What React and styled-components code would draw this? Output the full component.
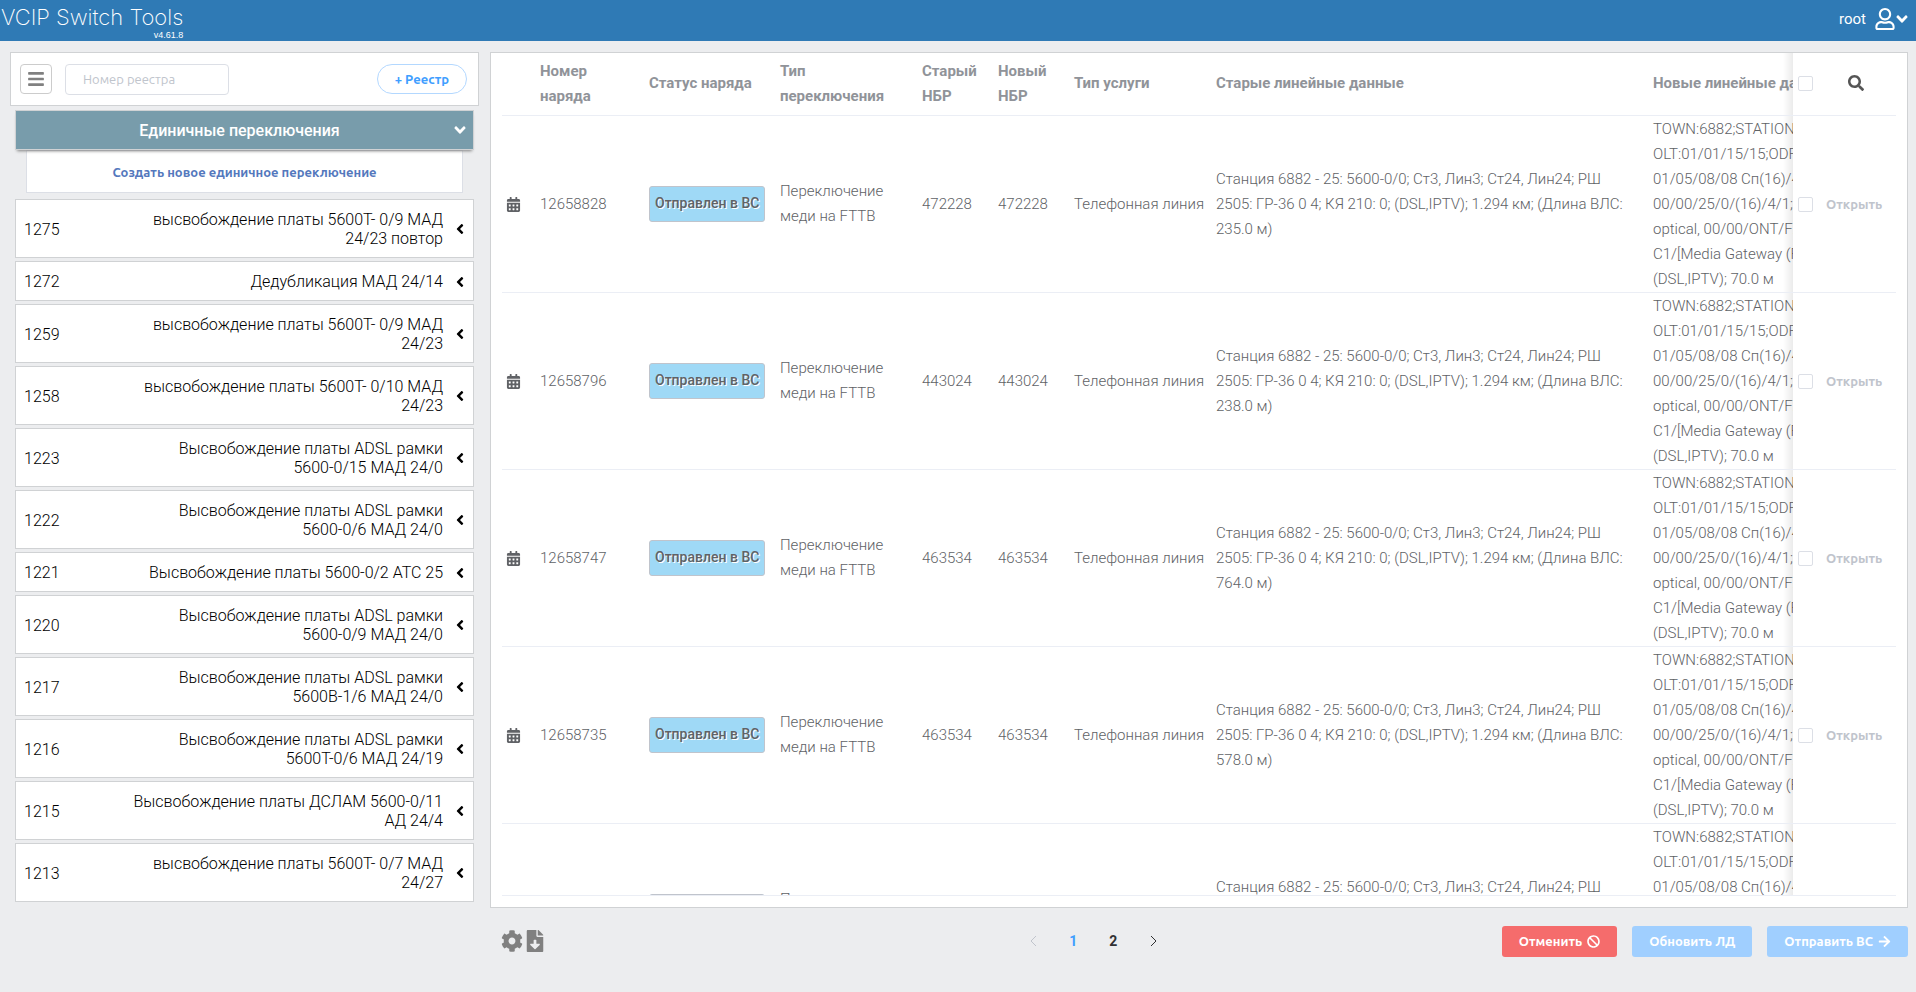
import React from 'react';
import styled, { createGlobalStyle } from 'styled-components';
import {
  FaAngleDown,
  FaAngleLeft,
  FaArrowRight,
  FaBan,
  FaBars,
  FaCalendarAlt,
  FaCog,
  FaFileDownload,
  FaRegUser,
  FaSearch,
} from 'react-icons/fa';

const registers = [
  { id: 1275, name: 'высвобождение платы 5600Т- 0/9 МАД\n24/23 повтор' },
  { id: 1272, name: 'Дедубликация МАД 24/14' },
  { id: 1259, name: 'высвобождение платы 5600Т- 0/9 МАД\n24/23' },
  { id: 1258, name: 'высвобождение платы 5600Т- 0/10 МАД\n24/23' },
  { id: 1223, name: 'Высвобождение платы ADSL рамки\n5600-0/15 МАД 24/0' },
  { id: 1222, name: 'Высвобождение платы ADSL рамки\n5600-0/6 МАД 24/0' },
  { id: 1221, name: 'Высвобождение платы 5600-0/2 АТС 25' },
  { id: 1220, name: 'Высвобождение платы ADSL рамки\n5600-0/9 МАД 24/0' },
  { id: 1217, name: 'Высвобождение платы ADSL рамки\n5600В-1/6 МАД 24/0' },
  { id: 1216, name: 'Высвобождение платы ADSL рамки\n5600Т-0/6 МАД 24/19' },
  { id: 1215, name: 'Высвобождение платы ДСЛАМ 5600-0/11\nАД 24/4' },
  { id: 1213, name: 'высвобождение платы 5600Т- 0/7 МАД\n24/27' },
];

const orders = [
  { id: '12658828', nbr: '472228', length: '235.0' },
  { id: '12658796', nbr: '443024', length: '238.0' },
  { id: '12658747', nbr: '463534', length: '764.0' },
  { id: '12658735', nbr: '463534', length: '578.0' },
  { id: '12658721', nbr: '463534', length: '612.0' },
];

const newLineData = [
  'TOWN:6882;STATION',
  'OLT:01/01/15/15;ODF',
  '01/05/08/08 Сп(16)/4,',
  '00/00/25/0/(16)/4/1;Ш',
  'optical, 00/00/ONT/FX',
  'C1/[Media Gateway (FX',
  '(DSL,IPTV); 70.0 м',
];

const Header = () => (
  <TopBar>
    <Brand>
      <Title>VCIP Switch Tools</Title>
      <Version>v4.61.8</Version>
    </Brand>
    <UserMenu type="button">
      root
      <UserIcons>
        <FaRegUser size={22} />
        <Chevron />
      </UserIcons>
    </UserMenu>
  </TopBar>
);

const Registers = () => (
  <Sidebar>
    <Filter>
      <MenuButton type="button" aria-label="Меню">
        <FaBars size={18} />
      </MenuButton>
      <SearchInput placeholder="Номер реестра" aria-label="Номер реестра" />
      <AddButton type="button">+ Реестр</AddButton>
    </Filter>
    <Groups>
      <GroupHeader type="button">
        <GroupTitle>Единичные переключения</GroupTitle>
        <Chevron />
      </GroupHeader>
      <CreateButton type="button">Создать новое единичное переключение</CreateButton>
      <List>
        {registers.map(item => (
          <li key={item.id}>
            <ListButton type="button">
              <span>{item.id}</span>
              <ListName>{item.name}</ListName>
              <FaAngleLeft size={16} />
            </ListButton>
          </li>
        ))}
      </List>
    </Groups>
  </Sidebar>
);

const Orders = () => (
  <Panel>
    <Scroll>
      <Table>
        <colgroup>
          <Col $w={28} />
          <Col $w={109} />
          <Col $w={131} />
          <Col $w={142} />
          <Col $w={76} />
          <Col $w={76} />
          <Col $w={142} />
          <Col />
          <Col $w={150} />
          <Col $w={103} />
        </colgroup>
        <thead>
          <tr>
            <Th aria-label="Дата" />
            <Th>Номер наряда</Th>
            <Th>Статус наряда</Th>
            <Th>Тип переключения</Th>
            <Th>Старый НБР</Th>
            <Th>Новый НБР</Th>
            <Th>Тип услуги</Th>
            <Th>Старые линейные данные</Th>
            <ClippedTh>
              <Line>Новые линейные данные</Line>
            </ClippedTh>
            <FixedTh>
              <Actions>
                <Checkbox type="checkbox" aria-label="Выбрать все" />
                <SearchButton type="button" aria-label="Поиск">
                  <FaSearch size={16} />
                </SearchButton>
              </Actions>
            </FixedTh>
          </tr>
        </thead>
        <tbody>
          {orders.map(order => (
            <tr key={order.id}>
              <IconCell>
                <FaCalendarAlt size={15} />
              </IconCell>
              <Td>{order.id}</Td>
              <Td>
                <Status>Отправлен в ВС</Status>
              </Td>
              <Td>Переключение меди на FTTB</Td>
              <Td>{order.nbr}</Td>
              <Td>{order.nbr}</Td>
              <Td>
                <Line>Телефонная линия</Line>
              </Td>
              <Td>
                Станция 6882 - 25: 5600-0/0; Ст3, Лин3; Ст24, Лин24; РШ 2505: ГР-36 0 4; КЯ
                210: 0; (DSL,IPTV); 1.294 км; (Длина ВЛС: {order.length} м)
              </Td>
              <ClippedTd>
                {newLineData.map(line => (
                  <Line key={line}>{line}</Line>
                ))}
              </ClippedTd>
              <FixedTd>
                <Actions>
                  <Checkbox type="checkbox" aria-label={`Выбрать ${order.id}`} />
                  <OpenButton type="button" disabled>Открыть</OpenButton>
                </Actions>
              </FixedTd>
            </tr>
          ))}
        </tbody>
      </Table>
    </Scroll>
  </Panel>
);

const Footer = () => (
  <BottomBar>
    <Tools>
      <ToolButton type="button" aria-label="Настройки">
        <FaCog size={22} />
      </ToolButton>
      <ToolButton type="button" aria-label="Скачать">
        <FaFileDownload size={22} />
      </ToolButton>
    </Tools>
    <Pager aria-label="Страницы">
      <PageButton type="button" aria-label="Назад" disabled>
        <PageArrow d="M7 1L2 6L7 11" />
      </PageButton>
      <PageButton type="button" $active>1</PageButton>
      <PageButton type="button">2</PageButton>
      <PageButton type="button" aria-label="Вперёд">
        <PageArrow d="M2 1L7 6L2 11" />
      </PageButton>
    </Pager>
    <Buttons>
      <ActionButton type="button" $color="#f56c6c">
        Отменить <FaBan size={13} />
      </ActionButton>
      <ActionButton type="button" $color="#a0cfff" disabled>Обновить ЛД</ActionButton>
      <ActionButton type="button" $color="#a0cfff" disabled>
        Отправить ВС <FaArrowRight size={13} />
      </ActionButton>
    </Buttons>
  </BottomBar>
);

const PageArrow = ({ d }) => (
  <svg width="9" height="12" viewBox="0 0 9 12" fill="none" stroke="currentColor">
    <path d={d} />
  </svg>
);

const App = () => (
  <>
    <GlobalStyle />
    <Page>
      <Header />
      <Content>
        <Registers />
        <Main>
          <Orders />
          <Footer />
        </Main>
      </Content>
    </Page>
  </>
);

export default App;


const GlobalStyle = createGlobalStyle`
    * {
        box-sizing: border-box;
    }

    body {
        margin: 0;
        background: #ecedef;
        font-family: Roboto, "Liberation Sans", sans-serif;
    }

    button {
        padding: 0;
        border: none;
        background: none;
        font-family: inherit;
        color: inherit;
    }

    svg {
        flex-shrink: 0;
    }
`;

const Page = styled.div`
    display: flex;
    flex-direction: column;
    height: 100vh;
    overflow: hidden;
`;

const TopBar = styled.header`
    display: flex;
    flex-shrink: 0;
    justify-content: space-between;
    align-items: flex-start;
    height: 41px;
    padding: 0 8px 0 1px;
    background: #2f7ab5;
    color: white;
`;

const Brand = styled.div`
    display: flex;
    flex-direction: column;
    align-items: flex-end;
`;

const Title = styled.h1`
    margin: 0;
    padding-top: 4px;
    font-family: Inter, sans-serif;
    font-size: 22px;
    font-weight: 200;
    line-height: 26px;
`;

const Version = styled.span`
    font: 9px/10px "Liberation Sans", sans-serif;
`;

const UserMenu = styled.button`
    display: flex;
    align-items: center;
    gap: 8px;
    height: 38px;
    font-size: 15px;
`;

const UserIcons = styled.span`
    display: flex;
    align-items: center;
`;

const Chevron = styled(FaAngleDown)`
    width: 12px;
    height: 18px;
`;

const Content = styled.div`
    display: flex;
    flex: 1;
    gap: 11px;
    min-height: 0;
    padding: 11px 8px 0 10px;
`;

const Sidebar = styled.aside`
    width: 469px;
    flex-shrink: 0;
`;

const Filter = styled.div`
    display: flex;
    align-items: center;
    height: 54px;
    padding: 0 11px 0 9px;
    border: 1px solid #d0d2d4;
    background: white;
`;

const MenuButton = styled.button`
    display: flex;
    align-items: center;
    justify-content: center;
    width: 32px;
    height: 30px;
    margin-right: 13px;
    border: 1px solid #cccccc;
    border-radius: 4px;
    color: #808080;
`;

const SearchInput = styled.input`
    width: 164px;
    height: 31px;
    padding: 0 17px;
    border: 1px solid #dcdfe6;
    border-radius: 4px;
    font: 13px Ubuntu, "Open Sans", sans-serif;

    &::placeholder {
        color: #c0c4cc;
    }
`;

const AddButton = styled.button`
    height: 30px;
    margin-left: auto;
    padding: 0 17px;
    border: 1px solid #b3d8ff;
    border-radius: 15px;
    font: 700 13px Ubuntu, "Open Sans", sans-serif;
    color: #409eff;
`;

const Groups = styled.div`
    display: flex;
    flex-direction: column;
    padding: 4px 5px 0;
`;

const GroupHeader = styled.button`
    z-index: 1;
    display: flex;
    align-items: center;
    height: 40px;
    padding-right: 7px;
    border: 1px solid #d0d2d4;
    background: #789cab;
    box-shadow: 0 3px 3px -2px #808080;
    color: white;
`;

const GroupTitle = styled.span`
    flex: 1;
    padding-left: 9px;
    font-size: 16px;
    font-weight: 500;
`;

const CreateButton = styled.button`
    height: 43px;
    margin: 0 11px 6px;
    border: 1px solid #dcdfe6;
    background: white;
    font: 700 13px Ubuntu, "Open Sans", sans-serif;
    color: #5478bd;
`;

const List = styled.ul`
    display: flex;
    flex-direction: column;
    gap: 3px;
    margin: 0;
    padding: 0;
    list-style: none;
`;

const ListButton = styled.button`
    display: flex;
    align-items: center;
    justify-content: space-between;
    width: 100%;
    padding: 10px 5px 9px 8px;
    border: 1px solid #d0d2d4;
    background: white;
    font-size: 16px;
    font-weight: 300;
    line-height: 19px;
    color: black;
`;

const ListName = styled.span`
    width: 320px;
    margin: 0 9px 0 auto;
    text-align: right;
    white-space: pre-line;
`;

const Main = styled.main`
    display: flex;
    flex: 1;
    flex-direction: column;
    min-width: 0;
`;

const Panel = styled.section`
    height: 856px;
    max-height: calc(100vh - 136px);
    padding: 0 11px 11px;
    border: 1px solid #d0d2d4;
    background: white;
`;

const Scroll = styled.div`
    height: 100%;
    overflow: hidden;
    border-bottom: 1px solid #ebeef5;
`;

const Table = styled.table`
    width: 100%;
    border-spacing: 0;
    table-layout: fixed;
    font-size: 15px;
    font-weight: 300;
    line-height: 25px;
    color: #606266;
`;

const Col = styled.col`
    width: ${props => (props.$w ? `${props.$w}px` : 'auto')};
`;

const Th = styled.th`
    height: 63px;
    padding: 0 10px 1px;
    border-bottom: 1px solid #ebeef5;
    text-align: left;
    font-weight: 700;
    color: #909399;
`;

const Td = styled.td`
    height: 177px;
    padding: 0 10px;
    border-bottom: 1px solid #ebeef5;
`;

const IconCell = styled(Td)`
    padding: 0 4px;

    svg {
        display: block;
    }
`;

const Line = styled.div`
    white-space: nowrap;
`;

const ClippedTh = styled(Th)`
    padding-right: 0;
    overflow: hidden;
`;

const ClippedTd = styled(Td)`
    padding-right: 0;
    overflow: hidden;
`;

/* soft edge where the actions column lies over the line data */
const FixedTh = styled(Th)`
    position: relative;
    padding: 0 5px 2px;

    &::before {
        content: '';
        position: absolute;
        top: 0;
        bottom: 0;
        left: -10px;
        width: 10px;
        background: linear-gradient(to left, rgba(0, 0, 0, 0.08), transparent);
    }
`;

const FixedTd = styled(FixedTh).attrs({ as: 'td' })`
    height: 177px;
    padding: 0 5px;
`;

const Actions = styled.div`
    display: flex;
    align-items: center;
`;

const Checkbox = styled.input`
    appearance: none;
    width: 15px;
    height: 15px;
    margin: 0;
    border: 1px solid #dcdfe6;
    border-radius: 2px;
    background: white;
`;

const SearchButton = styled.button`
    display: flex;
    margin-left: 35px;
    color: #555555;
`;

const OpenButton = styled.button`
    margin-left: 13px;
    font: 700 13px Ubuntu, "Open Sans", sans-serif;
    color: #c0c4cc;
`;

const Status = styled.span`
    display: inline-block;
    padding: 4px 5px 5px;
    border: 1px solid #c0c4cc;
    border-radius: 3px;
    background: #9fd9f6;
    font-size: 14px;
    font-weight: 500;
    white-space: nowrap;
    text-shadow: 1px 1px 0 white;
`;

const BottomBar = styled.footer`
    display: grid;
    grid-template-columns: 5fr auto 7fr;
    align-items: center;
    height: 66px;
`;

const Tools = styled.div`
    display: flex;
    padding-left: 11px;
    gap: 1px;
`;

const ToolButton = styled.button`
    display: flex;
    color: #808080;
`;

const Pager = styled.nav`
    display: flex;
    gap: 10px;
`;

const PageButton = styled.button`
    display: flex;
    align-items: center;
    justify-content: center;
    width: 30px;
    height: 28px;
    font-size: 14px;
    font-weight: 700;
    color: ${props => (props.$active ? '#409eff' : '#303133')};

    &:disabled {
        color: #c0c4cc;
    }
`;

const Buttons = styled.div`
    display: flex;
    justify-content: flex-end;
    gap: 15px;
`;

const ActionButton = styled.button`
    display: flex;
    align-items: center;
    gap: 5px;
    height: 31px;
    padding: 0 17px;
    border-radius: 3px;
    background: ${props => props.$color};
    font: 700 13px Ubuntu, "Open Sans", sans-serif;
    color: white;
`;
